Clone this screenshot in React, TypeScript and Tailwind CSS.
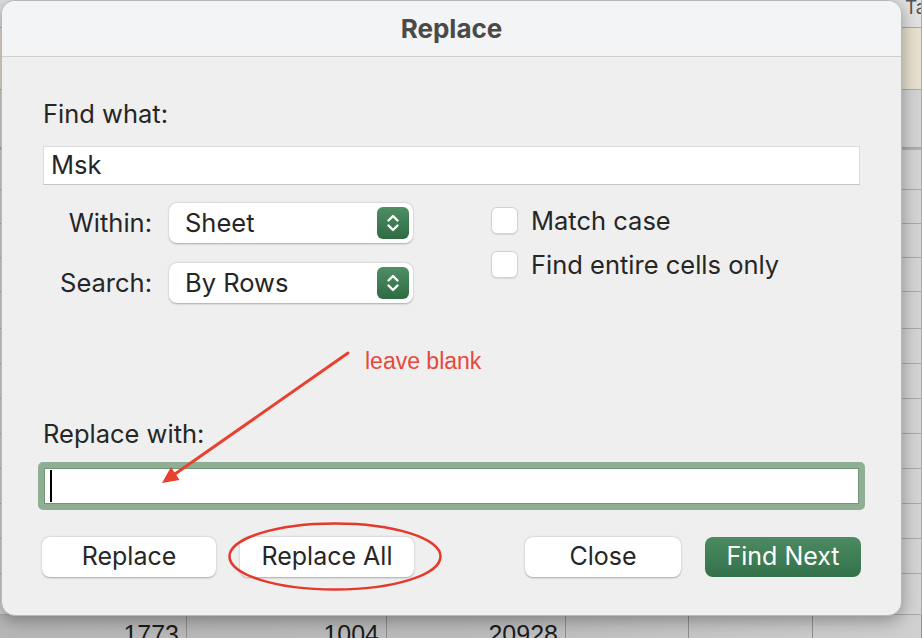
import React from 'react';

// spreadsheet rows that sit under the modal (only the edges show)
const ROWS = [
  'h-[28px] bg-[#e2e2e2]',
  'h-[62px] bg-[#e8e1cf]',
  'h-[58px] bg-[#d4d4d4]',
  'h-[42px] bg-[#d4d4d4] border-t-2 border-t-[#b0b0b0]',
  'h-[34px] bg-[#d4d4d4]',
  'h-[34px] bg-[#d4d4d4]',
  'h-[34px] bg-[#d4d4d4]',
  'h-[37px] bg-[#d4d4d4]',
  'h-[35px] bg-[#d4d4d4]',
  'h-[35px] bg-[#d4d4d4]',
  'h-[35px] bg-[#d4d4d4]',
  'h-[35px] bg-[#d4d4d4]',
  'h-[35px] bg-[#d4d4d4]',
  'h-[35px] bg-[#d4d4d4]',
  'h-[35px] bg-[#d4d4d4]',
  'h-[41px] bg-[#d4d4d4]',
];

const BOTTOM = ['1773', '1004', '20928', '', '', ''];

const Sheet = () => (
  <div className="flex flex-col">
    {ROWS.map((cls, i) => (
      <div key={i} className={`grid grid-cols-[187px_200px_179px_123px_124px_109px] ${cls}`}>
        {[0, 1, 2, 3, 4, 5].map(c => (
          <div key={c} className="overflow-hidden border-b border-r border-[#a9a9a9]">
            {i === 0 && c === 5 && (
              <span className="block whitespace-nowrap pl-[92px] text-[19px] leading-[16px] text-[#555]">Tab</span>
            )}
          </div>
        ))}
      </div>
    ))}
    <div className="grid h-[40px] grid-cols-[187px_200px_179px_123px_124px_109px] bg-gradient-to-r from-[#b7b7b7] via-[#bcbcbc] to-[#d0d0d0]">
      {BOTTOM.map((n, c) => (
        <div
          key={c}
          className="border-r border-[#8f8f8f] pr-[7px] pt-[4px] text-right font-['Liberation_Sans',Arial,sans-serif] text-[25px] leading-[30px] text-[#1c1c1c]"
        >
          {n}
        </div>
      ))}
    </div>
  </div>
);

const Stepper = () => (
  <span className="flex h-[32px] w-[32px] items-center justify-center rounded-[6px] bg-gradient-to-b from-[#4f8f65] to-[#2e6b43]">
    <svg width="14" height="22" viewBox="0 0 14 22" fill="none" stroke="white" strokeWidth="2.4" strokeLinecap="round" strokeLinejoin="round">
      <path d="M2.5 8.5 L7 4 L11.5 8.5" />
      <path d="M2.5 13.5 L7 18 L11.5 13.5" />
    </svg>
  </span>
);

const Select = ({ value }: { value: string }) => (
  <div className="flex h-[40px] w-[244px] items-center justify-between rounded-[8px] bg-white pl-[16px] pr-[4px] shadow-[0_0.5px_2px_rgba(0,0,0,0.3)]">
    <span>{value}</span>
    <Stepper />
  </div>
);

const Check = ({ label }: { label: string }) => (
  <label className="flex h-[27px] items-center gap-[13px] leading-[28px]">
    <span className="h-[27px] w-[27px] rounded-[6px] border border-[#d2d2d2] bg-white shadow-[0_0.5px_1px_rgba(0,0,0,0.1)]" />
    <span>{label}</span>
  </label>
);

const Button = ({ label, primary, w }: { label: string; primary?: boolean; w: string }) => (
  <button
    className={`h-[40px] ${w} rounded-[8px] text-[25px] ${
      primary
        ? 'bg-gradient-to-b from-[#4c8b61] to-[#33714a] text-white'
        : 'bg-white text-[#262626] shadow-[0_0.5px_2px_rgba(0,0,0,0.3)]'
    }`}
  >
    {label}
  </button>
);

export default function App() {
  return (
    <div className="relative h-[638px] w-[922px] overflow-hidden bg-[#d4d4d4] font-[Inter,sans-serif]">
      <Sheet />

      {/* modal dialog */}
      <div className="absolute left-[1px] top-0 w-[901px] overflow-hidden rounded-[14px] border border-[#b8b8b8] bg-[#efefef] text-[25.5px] text-[#262626] shadow-[0_4px_18px_rgba(0,0,0,0.35)]">
        <div className="flex h-[56px] items-center justify-center border-b border-[#cfcfcf] bg-[#f3f4f5]">
          <span className="text-[26px] font-bold text-[#4a4a4a]">Replace</span>
        </div>

        <div className="flex flex-col px-[40px] pb-[38px] pt-[43px]">
          <div className="h-[28px] pl-[1px] leading-[28px]">Find what:</div>
          <div className="mx-[1px] mt-[18px] flex h-[39px] items-center border border-[#dcdcdc] border-b-[#c4c4c4] bg-white pl-[7px]">
            Msk
          </div>

          <div className="mt-[18px] flex items-start">
            <div className="grid grid-cols-[110px_244px] items-center gap-x-[17px] gap-y-[20px]">
              <span className="text-right">Within:</span>
              <Select value="Sheet" />
              <span className="text-right">Search:</span>
              <Select value="By Rows" />
            </div>
            <div className="ml-[78px] mt-[4px] flex flex-col gap-[17px]">
              <Check label="Match case" />
              <Check label="Find entire cells only" />
            </div>
          </div>

          <div className="mt-[117px] h-[28px] pl-[1px] leading-[28px]">Replace with:</div>
          <div className="-mx-[4px] mt-[14px] h-[48px] rounded-[5px] border-[6px] border-[#8fae93] bg-white">
            <div className="flex h-full items-center border border-[#6f9677] pl-[5px]">
              <span className="h-[32px] w-[2px] bg-black" />
            </div>
          </div>

          <div className="mt-[27px] flex justify-between">
            <div className="flex gap-[24px]">
              <Button label="Replace" w="w-[174px]" />
              <Button label="Replace All" w="w-[174px]" />
            </div>
            <div className="flex gap-[24px]">
              <Button label="Close" w="w-[156px]" />
              <Button label="Find Next" w="w-[156px]" primary />
            </div>
          </div>
        </div>
      </div>

      {/* red annotations */}
      <svg className="pointer-events-none absolute inset-0" width="922" height="638" viewBox="0 0 922 638" fill="none">
        <line x1="348" y1="353" x2="175" y2="474" stroke="#e8412f" strokeWidth="3" strokeLinecap="round" />
        <polygon points="162,483 179.5,480 171,467" fill="#e8412f" />
        <ellipse cx="335" cy="556.5" rx="105.5" ry="33" stroke="#e5392a" strokeWidth="2.5" />
      </svg>
      <span className="absolute left-[365px] top-[347px] font-['Liberation_Sans',Arial,sans-serif] text-[23px] leading-[28px] text-[#e8473b]">
        leave blank
      </span>
    </div>
  );
}
